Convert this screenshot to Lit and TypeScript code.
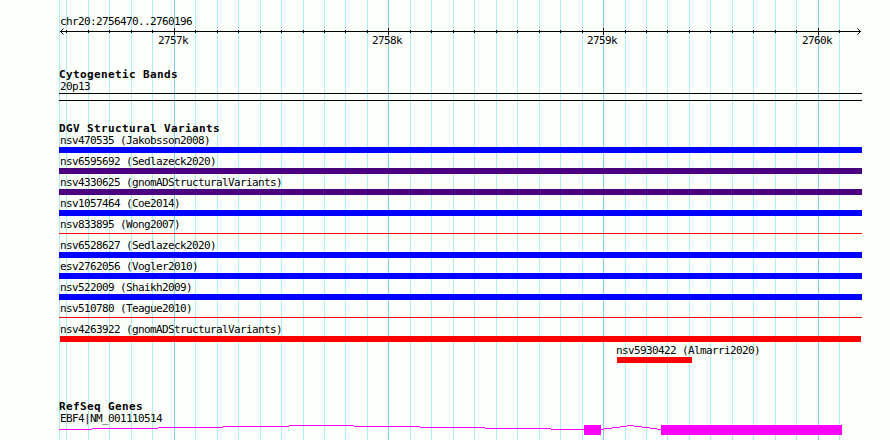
import { LitElement, html, css, svg } from 'lit';
import { customElement, property } from 'lit/decorators.js';
import { classMap } from 'lit/directives/class-map.js';
import { styleMap } from 'lit/directives/style-map.js';

interface Variant {
  name: string;
  kind: 'gain' | 'loss' | 'mixed';
  start?: number;
  end?: number;
  thin?: boolean;
}

const LEFT = 59;
const RIGHT = 862;

const VARIANTS: Variant[] = [
  { name: 'nsv470535 (Jakobsson2008)', kind: 'gain' },
  { name: 'nsv6595692 (Sedlazeck2020)', kind: 'mixed' },
  { name: 'nsv4330625 (gnomADStructuralVariants)', kind: 'mixed' },
  { name: 'nsv1057464 (Coe2014)', kind: 'gain' },
  { name: 'nsv833895 (Wong2007)', kind: 'loss', thin: true },
  { name: 'nsv6528627 (Sedlazeck2020)', kind: 'gain' },
  { name: 'esv2762056 (Vogler2010)', kind: 'gain' },
  { name: 'nsv522009 (Shaikh2009)', kind: 'gain' },
  { name: 'nsv510780 (Teague2010)', kind: 'loss', thin: true },
  { name: 'nsv4263922 (gnomADStructuralVariants)', kind: 'loss', start: 60, end: 861 },
  { name: 'nsv5930422 (Almarri2020)', kind: 'loss', start: 617, end: 692 },
];

// one tick every 100 bp, a major one every 1000 bp
const TICKS = Array.from({ length: 37 }, (_, i) => ({
  x: Math.round(66.42 + i * 21.465),
  major: i % 10 === 5,
}));

// [start, end, y] of each flat step of the intron lines
const INTRONS = [
  [0, 33, 4],
  [33, 99, 3],
  [99, 164, 2],
  [164, 230, 1],
  [230, 295, 0],
  [295, 361, 1],
  [361, 426, 2],
  [426, 492, 3],
  [492, 525, 4],
  [542, 545, 4],
  [545, 553, 3],
  [553, 561, 2],
  [561, 568, 1],
  [568, 575, 0],
  [575, 583, 1],
  [583, 591, 2],
  [591, 598, 3],
  [598, 602, 4],
];

@customElement('variant-row')
export class VariantRow extends LitElement {
  @property({ attribute: false }) variant!: Variant;

  static styles = css`
    :host {
      display: block;
      height: 21px;
    }

    .label {
      height: 13px;
      line-height: 13px;
      padding-left: 1px;
      white-space: pre;
    }

    .bar {
      height: 6px;
    }

    .gain {
      background: #00f;
    }

    .loss {
      background: #f00;
    }

    .mixed {
      background: #4b0082;
    }

    .thin {
      height: 1px;
      margin-top: 2px;
    }
  `;

  render() {
    const { name, kind, thin, start = LEFT, end = RIGHT } = this.variant;
    const labelOffset = Math.max(0, start - LEFT - 2);
    return html`
      <div class="label" style=${styleMap({ marginLeft: `${labelOffset}px` })}>${name}</div>
      <div
        class=${classMap({ bar: true, [kind]: true, thin: !!thin })}
        style=${styleMap({
          marginLeft: `${start - LEFT}px`,
          width: `${end - start}px`,
        })}
      ></div>
    `;
  }
}

@customElement('app-root')
export class AppRoot extends LitElement {
  static styles = css`
    :host {
      display: block;
      position: relative;
      box-sizing: border-box;
      width: 890px;
      height: 440px;
      padding: 15px 28px 0 59px;
      overflow: hidden;
      background: #fdfffc;
      color: #000;
      font-family: 'DejaVu Sans Mono', monospace;
      font-size: 11px;
      letter-spacing: -0.622px;
    }

    .grid {
      position: absolute;
      inset: 0;
    }

    .content {
      position: relative;
    }

    .text {
      height: 13px;
      line-height: 13px;
      padding-left: 1px;
      white-space: pre;
    }

    .title {
      height: 11px;
      line-height: 11px;
      font-size: 11px;
      font-weight: bold;
      letter-spacing: 0.378px;
      white-space: pre;
    }

    svg {
      display: block;
      overflow: visible;
      shape-rendering: crispEdges;
    }

    .minor {
      fill: #afeeee;
    }

    .major {
      fill: #87ceeb;
    }

    .arrow {
      fill: none;
      stroke: #000;
      shape-rendering: auto;
    }

    .cyto {
      margin-top: 15px;
    }

    .cytoband {
      height: 6px;
      margin-bottom: 22px;
      border: solid #000;
      border-width: 1px 0;
    }

    .variants {
      height: 231px;
      margin-bottom: 36px;
    }

    .gene {
      fill: #f0f;
    }
  `;

  _renderRuler() {
    return html`
      <svg width="803" height="26">
        <rect x="1" y="3" width="801" height="1" />
        <path class="arrow" d="M4.5 .5 L1.5 3.5 L4.5 6.5 M798.5 .5 L801.5 3.5 L798.5 6.5" />
        ${TICKS.map(
          ({ x, major }) => svg`
            <rect
              x=${x - LEFT}
              y=${major ? 0 : 2}
              width="1"
              height=${major ? 7 : 3}
            />
            ${major
              ? svg`<text x=${x - LEFT - 16} y="16">${2757 + Math.floor((x - 174) / 214)}k</text>`
              : ''}
          `
        )}
      </svg>
    `;
  }

  render() {
    return html`
      <svg class="grid" width="890" height="440">
        <rect class="minor" x="59" y="0" width="1" height="440" />
        ${TICKS.map(
          ({ x, major }) => svg`
            <rect class=${major ? 'major' : 'minor'} x=${x} y="0" width="1" height="440" />
          `
        )}
      </svg>
      <div class="content">
        <div class="text">chr20:2756470..2760196</div>
        ${this._renderRuler()}
        <div class="cyto">
          <div class="title">Cytogenetic Bands</div>
          <div class="text">20p13</div>
        </div>
        <div class="cytoband"></div>
        <div class="title">DGV Structural Variants</div>
        <div class="variants">
          ${VARIANTS.map(v => html`<variant-row .variant=${v}></variant-row>`)}
        </div>
        <div class="title">RefSeq Genes</div>
        <div class="text">EBF4|NM_001110514</div>
        <svg class="gene" width="803" height="10">
          ${INTRONS.map(
            ([start, end, y]) => svg`
              <rect x=${start} y=${y} width=${end - start} height="1" />
            `
          )}
          <rect x="525" y="0" width="17" height="10" />
          <rect x="602" y="0" width="181" height="10" />
        </svg>
      </div>
    `;
  }
}
